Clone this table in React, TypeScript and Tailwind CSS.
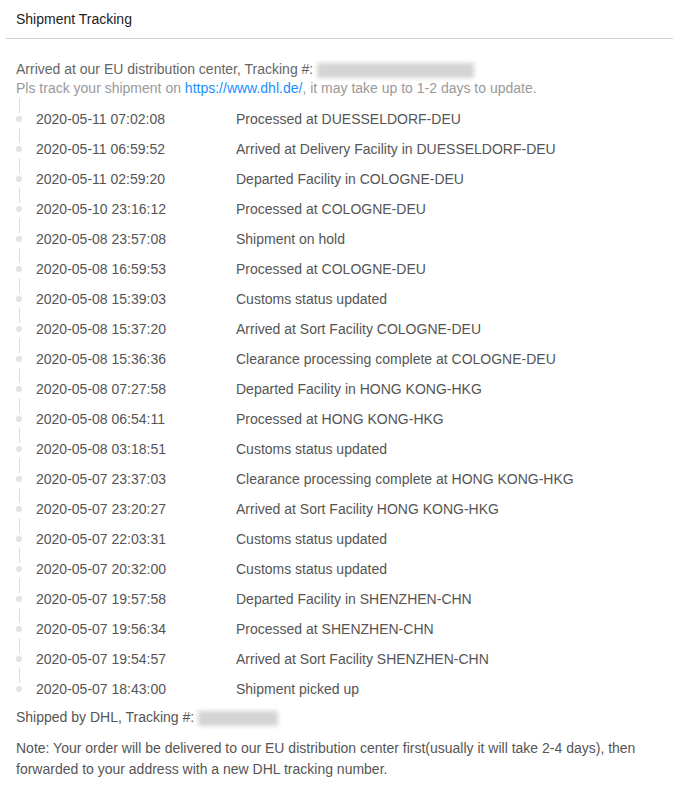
const events: [string, string][] = [
  ["2020-05-11 07:02:08", "Processed at DUESSELDORF-DEU"],
  ["2020-05-11 06:59:52", "Arrived at Delivery Facility in DUESSELDORF-DEU"],
  ["2020-05-11 02:59:20", "Departed Facility in COLOGNE-DEU"],
  ["2020-05-10 23:16:12", "Processed at COLOGNE-DEU"],
  ["2020-05-08 23:57:08", "Shipment on hold"],
  ["2020-05-08 16:59:53", "Processed at COLOGNE-DEU"],
  ["2020-05-08 15:39:03", "Customs status updated"],
  ["2020-05-08 15:37:20", "Arrived at Sort Facility COLOGNE-DEU"],
  ["2020-05-08 15:36:36", "Clearance processing complete at COLOGNE-DEU"],
  ["2020-05-08 07:27:58", "Departed Facility in HONG KONG-HKG"],
  ["2020-05-08 06:54:11", "Processed at HONG KONG-HKG"],
  ["2020-05-08 03:18:51", "Customs status updated"],
  ["2020-05-07 23:37:03", "Clearance processing complete at HONG KONG-HKG"],
  ["2020-05-07 23:20:27", "Arrived at Sort Facility HONG KONG-HKG"],
  ["2020-05-07 22:03:31", "Customs status updated"],
  ["2020-05-07 20:32:00", "Customs status updated"],
  ["2020-05-07 19:57:58", "Departed Facility in SHENZHEN-CHN"],
  ["2020-05-07 19:56:34", "Processed at SHENZHEN-CHN"],
  ["2020-05-07 19:54:57", "Arrived at Sort Facility SHENZHEN-CHN"],
  ["2020-05-07 18:43:00", "Shipment picked up"],
];

function Blurred({ width }: { width: string }) {
  return <span className={`inline-block align-middle h-[15px] bg-[#d4d4d4] blur-[2px] ${width}`} />;
}

export default function App() {
  return (
    <div className="w-[673px] min-h-[796px] bg-white text-[14px] font-['Liberation_Sans',Arial,sans-serif]">
      <div className="ml-[6px] h-[39px] border-b border-[#d0d0d0] pl-[10px] pt-px flex items-center text-[#222]">
        Shipment Tracking
      </div>

      <div className="pl-4 pt-[21px]">
        <div className="leading-[19px] text-[#666]">
          <div>
            Arrived at our EU distribution center, Tracking #:{" "}
            <Blurred width="w-[157px]" />
          </div>
          <div className="text-[#999]">
            Pls track your shipment on{" "}
            <a href="#" className="text-[#1890ff]">
              https://www.dhl.de/
            </a>
            , it may take up to 1-2 days to update.
          </div>
        </div>

        <ul>
          {events.map(([time, desc]) => (
            <li key={time} className="flex h-[30px] text-[#555]">
              <div className="w-[6px] flex flex-col items-center">
                <span className="w-px h-[15px] bg-[#dcdcdc]" />
                <span className="mt-[3px] w-[6px] h-[6px] rounded-full bg-[#e3e3e3]" />
              </div>
              <div className="pl-[14px] pt-[11px] leading-[20px] w-[214px]">{time}</div>
              <div className="pt-[11px] leading-[20px]">{desc}</div>
            </li>
          ))}
        </ul>

        <div className="mt-[9px] leading-[20px] text-[#555]">
          Shipped by DHL, Tracking #: <Blurred width="w-[80px]" />
        </div>

        <p className="mt-[11px] leading-[21px] text-[#555] pr-4">
          Note: Your order will be delivered to our EU distribution center first(usually it will take 2-4 days), then
          forwarded to your address with a new DHL tracking number.
        </p>
      </div>
    </div>
  );
}
